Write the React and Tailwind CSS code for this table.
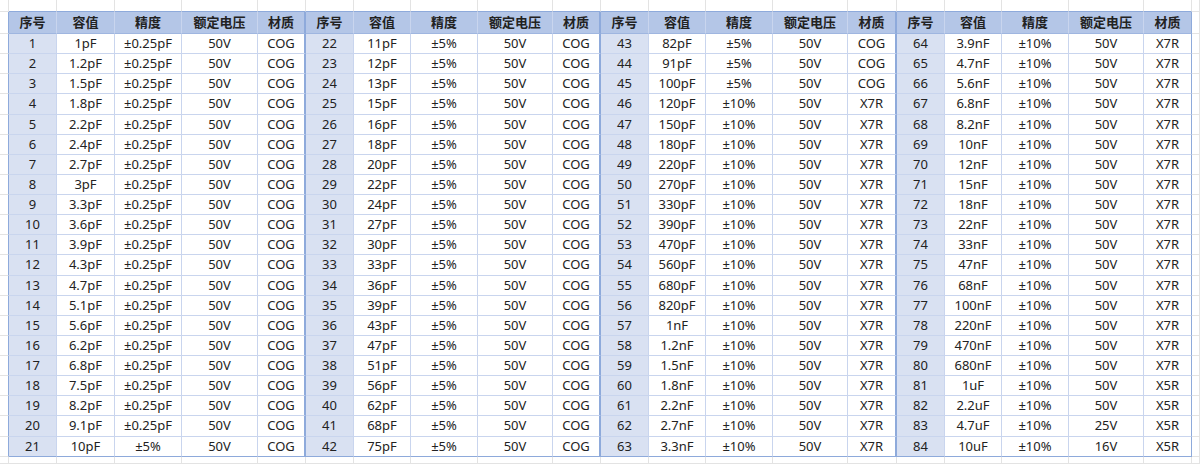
import React from "react";

const groups = [
  {
    start: 1,
    rows: [
      "1pF", "1.2pF", "1.5pF", "1.8pF", "2.2pF", "2.4pF", "2.7pF", "3pF", "3.3pF", "3.6pF", "3.9pF",
      "4.3pF", "4.7pF", "5.1pF", "5.6pF", "6.2pF", "6.8pF", "7.5pF", "8.2pF", "9.1pF", "10pF",
    ].map((cap, i) => [cap, i === 20 ? "±5%" : "±0.25pF", "50V", "COG"]),
  },
  {
    start: 22,
    rows: [
      "11pF", "12pF", "13pF", "15pF", "16pF", "18pF", "20pF", "22pF", "24pF", "27pF", "30pF",
      "33pF", "36pF", "39pF", "43pF", "47pF", "51pF", "56pF", "62pF", "68pF", "75pF",
    ].map((cap) => [cap, "±5%", "50V", "COG"]),
  },
  {
    start: 43,
    rows: [
      "82pF", "91pF", "100pF", "120pF", "150pF", "180pF", "220pF", "270pF", "330pF", "390pF", "470pF",
      "560pF", "680pF", "820pF", "1nF", "1.2nF", "1.5nF", "1.8nF", "2.2nF", "2.7nF", "3.3nF",
    ].map((cap, i) => (i < 3 ? [cap, "±5%", "50V", "COG"] : [cap, "±10%", "50V", "X7R"])),
  },
  {
    start: 64,
    rows: [
      "3.9nF", "4.7nF", "5.6nF", "6.8nF", "8.2nF", "10nF", "12nF", "15nF", "18nF", "22nF", "33nF",
      "47nF", "68nF", "100nF", "220nF", "470nF", "680nF", "1uF", "2.2uF", "4.7uF", "10uF",
    ].map((cap, i) => [
      cap,
      "±10%",
      i === 19 ? "25V" : i === 20 ? "16V" : "50V",
      i < 17 ? "X7R" : "X5R",
    ]),
  },
];

const headers = ["序号", "容值", "精度", "额定电压", "材质"];
const DATA_ROWS = 21;

// sheet rows: 0 = blank above, 1 = header, 2..22 = data, 23 = blank below
// sheet cols: 0 = blank left, 1..20 = table, 21 = blank right
function cellClass(r, c) {
  const inRow = r >= 1 && r <= DATA_ROWS + 1;
  const inCol = c >= 1 && c <= 20;
  const inside = inRow && inCol;
  const classes = [];

  // right edge
  if (inRow && c === 0) classes.push("border-r border-r-[#8eaadb]");
  else if (inside && c % 5 === 0 && c < 20) classes.push("border-r-2 border-r-[#8eaadb]");
  else if (inside && c === 20) classes.push("border-r border-r-[#8eaadb]");
  else if (inside) classes.push("border-r border-r-[#c9d5ee]");
  else classes.push("border-r border-r-[#e3e3e3]");

  // bottom edge
  if (r === 0 && inCol) classes.push("border-b border-b-[#8eaadb]");
  else if (inside && r === 1) classes.push("border-b border-b-[#9fb6e0]");
  else if (inside && r === DATA_ROWS + 1) classes.push("border-b border-b-[#8eaadb]");
  else if (inside) classes.push("border-b border-b-[#c9d5ee]");
  else classes.push("border-b border-b-[#e3e3e3]");

  if (inside && r === 1) classes.push("bg-[#b4c6e7] font-bold");
  else if (inside && (c - 1) % 5 === 0) classes.push("bg-[#d9e1f2]");
  else classes.push("bg-white");

  return classes.join(" ");
}

function cellText(r, c) {
  if (r < 1 || r > DATA_ROWS + 1 || c < 1 || c > 20) return "";
  const g = Math.floor((c - 1) / 5);
  const k = (c - 1) % 5;
  if (r === 1) return headers[k];
  const i = r - 2;
  if (k === 0) return String(groups[g].start + i);
  return groups[g].rows[i][k - 1];
}

export default function App() {
  const cells = [];
  for (let r = 0; r < DATA_ROWS + 3; r += 1) {
    for (let c = 0; c < 22; c += 1) {
      cells.push(
        <div
          key={`${r}-${c}`}
          className={`flex items-center justify-center overflow-hidden whitespace-nowrap ${cellClass(r, c)}`}
        >
          {cellText(r, c)}
        </div>
      );
    }
  }

  return (
    <div
      className="w-[1200px] h-[464px] overflow-hidden bg-white text-[13px] text-[#222222] leading-none"
      style={{ fontFamily: '"Noto Sans", "Noto Sans CJK SC", sans-serif' }}
    >
      <div className="grid h-full grid-cols-[9px_48px_58px_67px_76px_48px_48px_57px_67px_75px_48px_48px_57px_67px_75px_49px_48px_57px_67px_75px_48px_1fr] grid-rows-[12px_22px_repeat(21,20.14px)_1fr]">
        {cells}
      </div>
    </div>
  );
}
